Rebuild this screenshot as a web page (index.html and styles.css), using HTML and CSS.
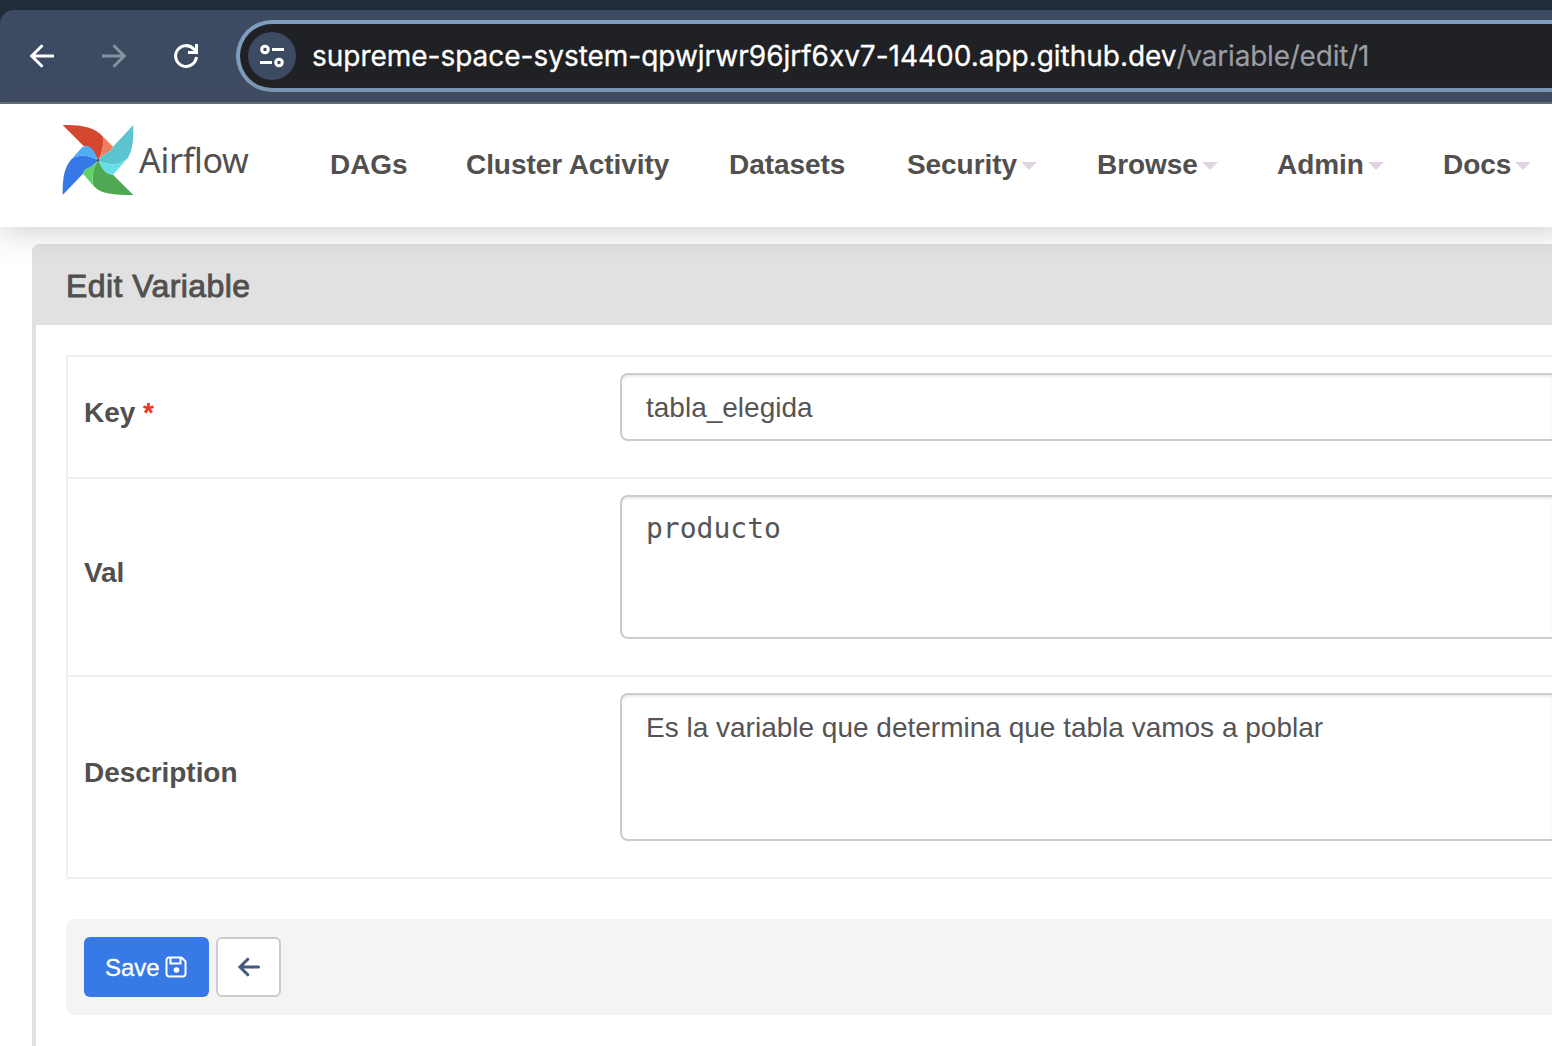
FILE: index.html
```html
<!DOCTYPE html>
<html lang="en">
<head>
<meta charset="utf-8">
<title>Edit Variable - Airflow</title>
<link rel="stylesheet" href="styles.css">
</head>
<body>
<div class="browser">
  <div class="toolbar">
    <svg class="tool back" viewBox="0 0 28 28"><path d="M26 14H4M14.5 3.2L3.7 14l10.8 10.8"/></svg>
    <svg class="tool forward" viewBox="0 0 28 28"><path d="M2 14h22M13.500 3.200L24.300 14l-10.800 10.800"/></svg>
    <svg class="tool reload" viewBox="0 0 28 28"><path d="M24.400 15a10.400 10.400 0 1 1-2.600-7.900L24.400 10"/><path d="M24.500 2v8.500H16"/></svg>
    <div class="address">
      <span class="site"><svg viewBox="0 0 28 28"><circle cx="7" cy="7.500" r="3.300"/><path d="M14 7.500h12M2 20.500h12"/><circle cx="21" cy="20.500" r="3.300"/></svg></span>
      <span class="url"><span class="host">supreme-space-system-qpwjrwr96jrf6xv7-14400.app.github.dev</span><span class="path">/variable/edit/1</span></span>
    </div>
  </div>
</div>
<header class="navbar">
  <a class="brand">
    <svg viewBox="66 60 216 214">
      <path fill="#d3482f" d="M68 62C120 60 164 68 188 96C192 122 187 146 174 168C162 140 150 124 130 124Z"/>
      <path fill="#ee7e5e" d="M188 96L219 127C216 144 192 144 174 168C188 146 192 122 188 96Z"/>
      <path fill="#5bc4d1" d="M280 62L219 127C216 144 192 144 174 168C202 184 235 187 264 160C278 136 280 110 280 62Z"/>
      <path fill="#67dde9" d="M174 168C202 184 235 187 264 160L219 211C202 212 188 200 174 168Z"/>
      <path fill="#4fa952" d="M280 272L219 211C202 212 188 200 174 168C160 188 154 220 161 245C184 270 220 272 280 272Z"/>
      <path fill="#62d36b" d="M161 245L129 208C133 190 156 192 174 168C160 188 154 220 161 245Z"/>
      <path fill="#3679e6" d="M68 272L129 208C133 190 156 192 174 168C148 152 115 149 95 164C72 190 68 220 68 272Z"/>
      <path fill="#50adf5" d="M95 164L127 128C144 118 162 130 174 168C148 152 115 149 95 164Z"/>
      <circle cx="174" cy="168" r="4" fill="#51504f"/>
    </svg>
    <span>Airflow</span>
  </a>
  <nav class="menu">
    <a>DAGs</a><a>Cluster Activity</a><a>Datasets</a><a>Security<i class="caret"></i></a><a>Browse<i class="caret"></i></a><a>Admin<i class="caret"></i></a><a>Docs<i class="caret"></i></a>
  </nav>
</header>
<main class="panel">
  <h1>Edit Variable</h1>
  <div class="panel-body">
    <div class="fields">
      <div class="row key"><label>Key <b class="required">*</b></label><div class="control">tabla_elegida</div></div>
      <div class="row val"><label>Val</label><div class="control mono">producto</div></div>
      <div class="row description"><label>Description</label><div class="control">Es la variable que determina que tabla vamos a poblar</div></div>
    </div>
    <div class="actions">
      <button class="save">Save<svg viewBox="0 0 24 24"><path d="M5 2.500h12.500l4 4V19a2.500 2.500 0 0 1-2.500 2.500H5A2.500 2.500 0 0 1 2.500 19V5A2.500 2.500 0 0 1 5 2.500zM6.500 3v5.500h10V3"/><circle cx="12.500" cy="15" r="2.800"/></svg></button>
      <button class="return"><svg viewBox="0 0 24 24"><path d="M21.500 12H3M10.800 4.200L3 12l7.800 7.800"/></svg></button>
    </div>
  </div>
</main>
</body>
</html>
```
FILE: styles.css
```css
* { box-sizing: border-box; }
html { overflow: hidden; }
body { margin: 0; height: 1046px; overflow: hidden; background: #fff; color: #51504f; font: 28px/40px "Liberation Sans", Arial, sans-serif; }
svg { display: block; fill: none; flex: none; }

.browser { height: 104px; padding-top: 10px; background: #222c38; }
.toolbar { display: flex; align-items: center; height: 94px; padding-left: 28px; background: #3d4b62; border-bottom: 2px solid #65737f; border-radius: 14px 0 0 0; overflow: hidden; }
.tool { width: 28px; height: 28px; margin-right: 44px; stroke: #fff; stroke-width: 3; }
.forward { stroke: #8791a0; }
.reload { margin-right: 36px; }
.address { display: flex; align-items: center; flex: 1; height: 72px; padding-left: 8px; border: 4px solid #7f9dbf; border-right: 0; border-radius: 36px 0 0 36px; background: #202124; }
.site { display: grid; place-items: center; width: 48px; height: 48px; border-radius: 50%; background: #3d4b62; }
.site svg { width: 28px; height: 28px; stroke: #fff; stroke-width: 3; }
.url { margin-left: 16px; font: 28px/40px Inter, sans-serif; white-space: nowrap; }
.host { color: #fff; letter-spacing: -.02px; -webkit-text-stroke: .3px #fff; }
.path { color: #9a9da1; letter-spacing: -.22px; -webkit-text-stroke: .2px #9a9da1; }

.navbar { position: relative; display: flex; height: 123px; padding-left: 62px; background: #fff; box-shadow: 6px -2px 30px 6px rgba(81, 80, 79, .28); }
.brand { display: flex; flex: none; width: 268px; padding-top: 20px; }
.brand svg { width: 72px; height: 72px; }
.brand span { margin-left: 5px; padding-top: 16px; font: 34px/40px "Noto Sans", sans-serif; letter-spacing: -.3px; font-variant-ligatures: common-ligatures; }
.menu { display: grid; grid-template-columns: 136px 263px 178px 190px 180px 166px 100px; flex: none; padding-top: 41px; font-weight: 700; letter-spacing: -.07px; white-space: nowrap; }
.menu a { display: flex; }
.caret { width: 0; height: 0; margin: 17px 0 0 4px; border: 8px solid transparent; border-top-color: #e0d4e2; border-bottom: 0; }

.panel { height: 802px; margin: 17px 0 0 32px; border-left: 4px solid #e1e1e1; border-radius: 8px 0 0 0; }
.panel h1 { height: 81px; margin: 0 0 0 -4px; padding: 22px 0 0 34px; border-radius: 8px 0 0 0; background: #e1e1e1; font-size: 32px; line-height: 40px; font-weight: 400; letter-spacing: .42px; -webkit-text-stroke: .9px #51504f; }
.panel-body { padding: 30px 0 0 30px; }
.fields { border: 2px solid #f0f0f0; border-right: 0; }
.row { display: grid; grid-template-columns: 552px 1fr; align-items: start; padding-top: 16px; border-bottom: 2px solid #f0f0f0; }
.row:last-child { border-bottom: 0; }
.row label { align-self: center; padding-left: 16px; font-weight: 700; letter-spacing: -.05px; }
.required { color: #ee3224; }
.key { height: 122px; }
.val { height: 198px; }
.description { height: 200px; }
.row label { margin-top: -24px; }
.control { padding: 13px 24px; border: 2px solid #ccc; border-right: 0; border-radius: 8px 0 0 8px; box-shadow: inset 0 2px 2px rgba(0, 0, 0, .075); color: #555; }
.key .control { height: 68px; }
.val .control { height: 144px; }
.description .control { height: 148px; }
.control.mono { padding-top: 12px; font-family: "DejaVu Sans Mono", monospace; }

.actions { display: flex; gap: 7px; height: 96px; margin-top: 40px; padding: 18px; border-radius: 8px 0 0 8px; background: #f4f4f4; }
button { display: flex; align-items: center; height: 60px; margin: 0; padding: 0; border-radius: 6px; font: 24px/36px "Liberation Sans", Arial, sans-serif; }
.save { width: 125px; padding: 2px 0 0 21px; border: 0; background: #377ae6; color: #fff; -webkit-text-stroke: .3px #fff; }
.save svg { width: 24px; height: 24px; margin: -2px 0 0 4px; stroke: #fff; stroke-width: 2; }
.save circle { fill: #fff; stroke: none; }
.return { justify-content: center; width: 65px; border: 2px solid #ccc; background: #fff; }
.return svg { width: 24px; height: 24px; stroke: #435a7e; stroke-width: 3; stroke-linecap: round; }
```
